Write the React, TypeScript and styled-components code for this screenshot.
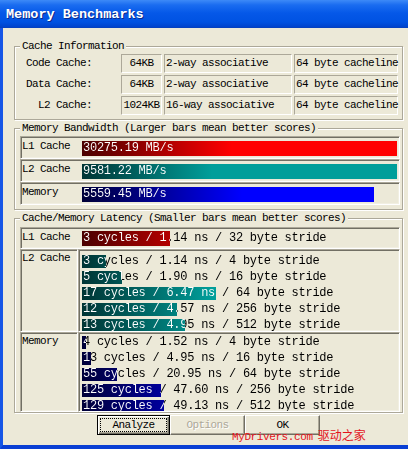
import React from 'react';
import styled, { createGlobalStyle } from 'styled-components';

const GlobalStyle = createGlobalStyle`
  * {
    box-sizing: border-box;
  }
  html, body {
    margin: 0;
    padding: 0;
    background: #ece9d8;
  }
  body {
    width: 408px;
    height: 449px;
    overflow: hidden;
  }
`;

const mono = `"Liberation Mono", "DejaVu Sans Mono", monospace`;

const Window = styled.div`
  position: relative;
  width: 408px;
  height: 449px;
  display: flex;
  flex-direction: column;
  font-family: ${mono};
  color: #000;
`;

const TitleBar = styled.div`
  flex: none;
  height: 28px;
  display: flex;
  align-items: center;
  padding-left: 6px;
  background: linear-gradient(
    180deg,
    #3d8af7 0px,
    #1a6cf0 5px,
    #0558e8 13px,
    #0052e2 22px,
    #0043cc 27px,
    #0a3fb5 28px
  );
  color: #fff;
  font-weight: bold;
  font-size: 13.5px;
  text-shadow: 1px 1px 0 #0a2a8c;
`;

const Body = styled.div`
  flex: 1;
  min-height: 0;
  display: flex;
  flex-direction: column;
  gap: 2px;
  padding: 12px 5px 0 11px;
  background: #ece9d8;
  border-left: 3px solid #1656e6;
  border-bottom: 4px solid #0a3fd4;
`;

const Group = styled.fieldset<{ $padTop: number; $padBottom: number }>`
  margin: 0;
  min-width: 0;
  padding: ${p => p.$padTop}px 2px ${p => p.$padBottom}px 5px;
  border: 1px solid #aca899;
  box-shadow: 1px 1px 0 #fff, inset 1px 1px 0 #fff;
`;

const Legend = styled.legend`
  margin: 0;
  padding: 0 2px;
  font-size: 11px;
  letter-spacing: -0.6px;
  line-height: 12px;
  background: #ece9d8;
`;

const InfoGrid = styled.div`
  display: grid;
  grid-template-columns: 99px 41px 128px 104px;
  grid-auto-rows: 19px;
  column-gap: 2px;
  row-gap: 2px;
  font-size: 11px;
  letter-spacing: -0.6px;
`;

const InfoLabel = styled.div`
  text-align: right;
  padding-right: 27px;
  line-height: 19px;
`;

const InfoField = styled.div<{ $align?: 'left' | 'center' }>`
  border: 1px solid;
  border-color: #aca899 #fff #fff #aca899;
  line-height: 17px;
  padding-left: ${p => (p.$align === 'center' ? 0 : 1)}px;
  text-align: ${p => p.$align || 'left'};
  white-space: nowrap;
`;

const SunkenRow = styled.div<{ $height: number }>`
  display: flex;
  height: ${p => p.$height}px;
  padding: 1px;
  border: 1px solid;
  border-color: #aca899 #fff #fff #aca899;
  box-shadow: inset 1px 1px 0 #716f64, inset -1px -1px 0 #f1efe2;
`;

const RowLabel = styled.div`
  flex: none;
  width: 60px;
  padding-top: 1px;
  font-size: 11px;
  letter-spacing: -0.6px;
  line-height: 14px;
`;

const LatencyBlock = styled.div<{ $height: number }>`
  display: flex;
  height: ${p => p.$height}px;
`;

const LabelCell = styled.div`
  flex: none;
  width: 58px;
  padding: 1px 0 0 1px;
  border: 1px solid;
  border-color: #aca899 #fff #fff #aca899;
  box-shadow: inset 1px 1px 0 #716f64, inset -1px -1px 0 #f1efe2;
  font-size: 11px;
  letter-spacing: -0.6px;
  line-height: 14px;
`;

const BarsCell = styled.div<{ $padTop: number }>`
  flex: 1;
  overflow: hidden;
  padding: ${p => p.$padTop}px 1px 0 3px;
  border: 1px solid;
  border-color: #aca899 #fff #fff #aca899;
  box-shadow: inset 1px 1px 0 #716f64, inset -1px -1px 0 #f1efe2;
`;

const gradients = {
  red: 'linear-gradient(90deg, #4a0000 0px, #ff0000 150px)',
  teal: 'linear-gradient(90deg, #003434 0px, #009e9a 130px)',
  blue: 'linear-gradient(90deg, #000038 0px, #0000ff 160px)',
};

type Kind = keyof typeof gradients;

const BarTrack = styled.div<{ $kind: Kind; $h: number; $top: number; $w?: number; $mt?: number }>`
  flex: none;
  width: ${p => (p.$w ? `${p.$w}px` : 'auto')};
  height: ${p => p.$h}px;
  margin-top: ${p => p.$mt || 0}px;
  padding-left: 1px;
  line-height: ${p => p.$h}px;
  font-size: 12px;
  letter-spacing: -0.25px;
  white-space: nowrap;
  background-image: ${p => gradients[p.$kind]};
  background-repeat: no-repeat;
  background-position: 0 ${p => p.$top}px;
`;

// white over the bar, black past its end
const BarText = styled.span`
  display: inline-block;
  color: transparent;
  -webkit-background-clip: text;
  background-clip: text;
`;

const ButtonRow = styled.div`
  display: flex;
  padding-left: 83px;
`;

const Button = styled.button<{ $width: number; $default?: boolean }>`
  width: ${p => p.$width}px;
  height: 20px;
  padding: 0;
  margin: 0;
  background: #ece9d8;
  font-family: ${mono};
  font-size: 11px;
  letter-spacing: -0.6px;
  color: ${p => (p.disabled ? '#aca899' : '#000')};
  text-shadow: ${p => (p.disabled ? '1px 1px 0 #fff' : 'none')};
  border: 1px solid;
  border-color: ${p => (p.$default ? '#000' : '#fff #716f64 #716f64 #fff')};
  box-shadow: ${p =>
    p.$default
      ? 'inset 1px 1px 0 #fff, inset -1px -1px 0 #716f64, inset -2px -2px 0 #aca899'
      : 'inset -1px -1px 0 #aca899'};
`;

const FocusRing = styled.span`
  display: block;
  margin: 2px;
  border: 1px dotted #000;
  line-height: 12px;
`;

const Watermark = styled.div`
  position: absolute;
  left: 232px;
  top: 428px;
  color: #e3131b;
  font-size: 11px;
  letter-spacing: -0.4px;
  line-height: 14px;
  white-space: nowrap;
`;

const WatermarkCjk = styled.span`
  margin-left: 5px;
  font-family: "Noto Sans CJK SC", sans-serif;
  font-size: 12px;
  letter-spacing: 0;
`;

const cacheInfo = [
  { name: 'Code Cache:', size: '64KB', assoc: '2-way associative', line: '64 byte cacheline' },
  { name: 'Data Cache:', size: '64KB', assoc: '2-way associative', line: '64 byte cacheline' },
  { name: 'L2 Cache:', size: '1024KB', assoc: '16-way associative', line: '64 byte cacheline' },
];

const bandwidth: { label: string; text: string; width: number; kind: Kind }[] = [
  { label: 'L1 Cache', text: '30275.19 MB/s', width: 315, kind: 'red' },
  { label: 'L2 Cache', text: '9581.22 MB/s', width: 315, kind: 'teal' },
  { label: 'Memory', text: '5559.45 MB/s', width: 292, kind: 'blue' },
];

const l2Latency = [
  { text: '3 cycles / 1.14 ns / 4 byte stride', width: 24 },
  { text: '5 cycles / 1.90 ns / 16 byte stride', width: 40 },
  { text: '17 cycles / 6.47 ns / 64 byte stride', width: 134 },
  { text: '12 cycles / 4.57 ns / 256 byte stride', width: 95 },
  { text: '13 cycles / 4.95 ns / 512 byte stride', width: 103 },
];

const memLatency = [
  { text: '4 cycles / 1.52 ns / 4 byte stride', width: 4 },
  { text: '13 cycles / 4.95 ns / 16 byte stride', width: 9 },
  { text: '55 cycles / 20.95 ns / 64 byte stride', width: 35 },
  { text: '125 cycles / 47.60 ns / 256 byte stride', width: 79 },
  { text: '129 cycles / 49.13 ns / 512 byte stride', width: 82 },
];

type BarProps = {
  text: string;
  width: number;
  kind: Kind;
  h: number;
  top: number;
  fh: number;
  trackWidth?: number;
  mt?: number;
};

const Bar: React.FC<BarProps> = ({ text, width, kind, h, top, fh, trackWidth, mt }) => (
  <BarTrack
    $kind={kind}
    $h={h}
    $top={top}
    $w={trackWidth}
    $mt={mt}
    style={{ backgroundSize: `${width}px ${fh}px` }}
  >
    <BarText
      style={{
        backgroundImage: `linear-gradient(90deg, #fff ${width - 1}px, #000 ${width - 1}px)`,
      }}
    >
      {text}
    </BarText>
  </BarTrack>
);

const App: React.FC = () => {
  return (
    <Window>
      <GlobalStyle />
      <TitleBar>Memory Benchmarks</TitleBar>
      <Body>
        <Group $padTop={2} $padBottom={4}>
          <Legend>Cache Information</Legend>
          <InfoGrid>
            {cacheInfo.map(row => (
              <React.Fragment key={row.name}>
                <InfoLabel>{row.name}</InfoLabel>
                <InfoField $align="center">{row.size}</InfoField>
                <InfoField>{row.assoc}</InfoField>
                <InfoField>{row.line}</InfoField>
              </React.Fragment>
            ))}
          </InfoGrid>
        </Group>

        <Group $padTop={2} $padBottom={4}>
          <Legend>Memory Bandwidth (Larger bars mean better scores)</Legend>
          {bandwidth.map(row => (
            <SunkenRow $height={23} key={row.label}>
              <RowLabel>{row.label}</RowLabel>
              <Bar
                text={row.text}
                width={row.width}
                kind={row.kind}
                h={15}
                top={0}
                fh={15}
                trackWidth={315}
                mt={3}
              />
            </SunkenRow>
          ))}
        </Group>

        <Group $padTop={3} $padBottom={0}>
          <Legend>Cache/Memory Latency (Smaller bars mean better scores)</Legend>
          <SunkenRow $height={22}>
            <RowLabel>L1 Cache</RowLabel>
            <Bar
              text="3 cycles / 1.14 ns / 32 byte stride"
              width={88}
              kind="red"
              h={15}
              top={0}
              fh={15}
              trackWidth={315}
              mt={2}
            />
          </SunkenRow>
          <LatencyBlock $height={83}>
            <LabelCell>L2 Cache</LabelCell>
            <BarsCell $padTop={3}>
              {l2Latency.map(row => (
                <Bar key={row.text} text={row.text} width={row.width} kind="teal" h={16} top={2} fh={13} />
              ))}
            </BarsCell>
          </LatencyBlock>
          <LatencyBlock $height={80}>
            <LabelCell>Memory</LabelCell>
            <BarsCell $padTop={1}>
              {memLatency.map(row => (
                <Bar key={row.text} text={row.text} width={row.width} kind="blue" h={16} top={2} fh={13} />
              ))}
            </BarsCell>
          </LatencyBlock>
        </Group>

        <ButtonRow>
          <Button $width={73} $default>
            <FocusRing>Analyze</FocusRing>
          </Button>
          <Button $width={75} disabled>
            Options
          </Button>
          <Button $width={75}>OK</Button>
        </ButtonRow>
      </Body>
      <Watermark>
        MyDrivers.com<WatermarkCjk>驱动之家</WatermarkCjk>
      </Watermark>
    </Window>
  );
};

export default App;
